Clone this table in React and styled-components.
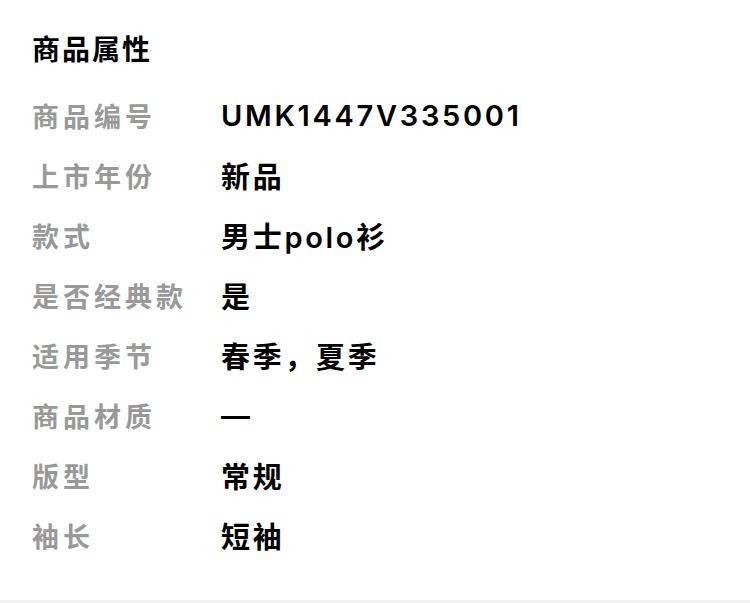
import styled, { createGlobalStyle } from "styled-components";

const GlobalStyle = createGlobalStyle`
  html, body {
    margin: 0;
    padding: 0;
    background: #f2f2f2;
  }
  body {
    font-family: Inter, "Noto Sans CJK SC", sans-serif;
  }
`;

const Card = styled.div`
  width: 750px;
  height: 600px;
  box-sizing: border-box;
  background: #ffffff;
  padding: 30px 0 0 32px;
`;

const Title = styled.div`
  height: 40px;
  line-height: 40px;
  font-size: 28px;
  font-weight: 700;
  letter-spacing: 2px;
  color: #000;
`;

const List = styled.div`
  margin-top: 15px;
  display: flex;
  flex-direction: column;
`;

const Row = styled.div`
  display: flex;
  align-items: center;
  height: 60px;
`;

const Label = styled.div`
  width: 189px;
  flex-shrink: 0;
  font-size: 27px;
  font-weight: 600;
  letter-spacing: 4px;
  color: #999999;
`;

const Value = styled.div`
  font-size: 29px;
  font-weight: 600;
  letter-spacing: 2.7px;
  color: #000;
`;

const attrs = [
  ["商品编号", "UMK1447V335001"],
  ["上市年份", "新品"],
  ["款式", "男士polo衫"],
  ["是否经典款", "是"],
  ["适用季节", "春季，夏季"],
  ["商品材质", "—"],
  ["版型", "常规"],
  ["袖长", "短袖"],
];

export default function App() {
  return (
    <>
      <GlobalStyle />
      <Card>
        <Title>商品属性</Title>
        <List>
          {attrs.map(([k, v]) => (
            <Row key={k}>
              <Label>{k}</Label>
              <Value>{v}</Value>
            </Row>
          ))}
        </List>
      </Card>
    </>
  );
}
